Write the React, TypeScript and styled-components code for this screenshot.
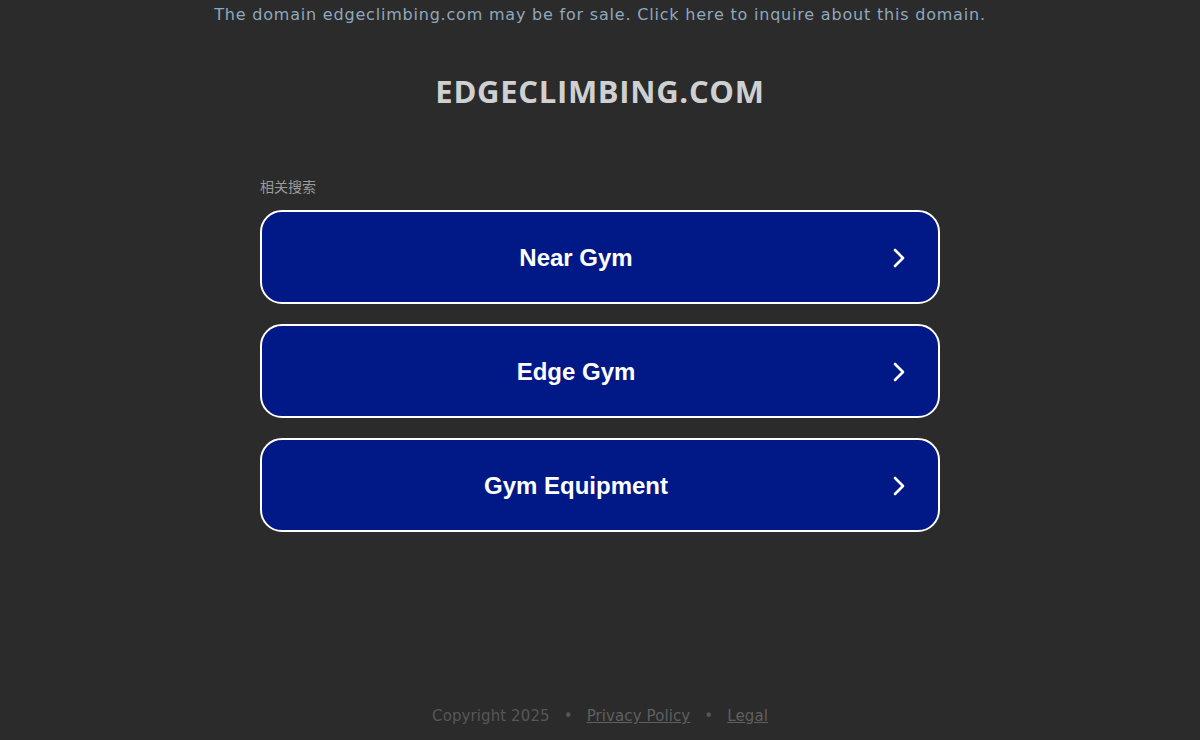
import * as React from "react";
import styled, { createGlobalStyle } from "styled-components";

const GlobalStyle = createGlobalStyle`
  html, body {
    margin: 0;
    padding: 0;
    background: #2b2b2b;
  }
  * {
    box-sizing: border-box;
  }
`;

const SPage = styled.div`
  min-height: 740px;
  display: flex;
  flex-direction: column;
  align-items: center;
  font-family: "DejaVu Sans", sans-serif;
`;

const SNotice = styled.a`
  display: block;
  margin-top: 4px;
  font-size: 16px;
  line-height: 22px;
  letter-spacing: 0.8px;
  color: #8fa8bd;
  text-decoration: none;
`;

const STitle = styled.h1`
  margin: 47px 0 0;
  font-family: "Open Sans", sans-serif;
  font-size: 31px;
  line-height: 36px;
  font-weight: 700;
  letter-spacing: 0.7px;
  color: #cfd0d2;
`;

const SSection = styled.div`
  width: 680px;
  margin-top: 68px;
`;

const SLabel = styled.div`
  font-family: "Noto Sans CJK SC", sans-serif;
  font-size: 14px;
  line-height: 18px;
  color: #9a9a9a;
  margin-bottom: 15px;
`;

const SList = styled.div`
  display: flex;
  flex-direction: column;
  gap: 20px;
`;

const SLink = styled.a`
  position: relative;
  display: flex;
  align-items: center;
  justify-content: center;
  height: 94px;
  padding: 1px 48px 0 0;
  border: 2px solid #ffffff;
  border-radius: 22px;
  background: #011887;
  color: #ffffff;
  font-family: "Liberation Sans", Arial, sans-serif;
  font-weight: 700;
  font-size: 24px;
  text-decoration: none;
`;

const SChevron = styled.svg`
  position: absolute;
  right: 32px;
  top: 50%;
  margin-top: -10px;
  width: 14px;
  height: 22px;
`;

const SFooter = styled.div`
  margin-top: auto;
  margin-bottom: 14px;
  display: flex;
  gap: 14px;
  font-size: 15px;
  line-height: 20px;
  letter-spacing: 0.1px;
  color: #575757;
`;

const SFooterLink = styled.a`
  color: #5f5f5f;
  text-decoration: underline;
`;

const searches = ["Near Gym", "Edge Gym", "Gym Equipment"];

const App = () => (
  <SPage>
    <GlobalStyle />
    <SNotice href="#">
      {"The domain edgeclimbing.com may be for sale. Click here to inquire about this domain."}
    </SNotice>
    <STitle>{"EDGECLIMBING.COM"}</STitle>
    <SSection>
      <SLabel>{"相关搜索"}</SLabel>
      <SList>
        {searches.map(term => (
          <SLink key={term} href="#">
            {term}
            <SChevron viewBox="0 0 14 22">
              <path
                d="M3 3 L11 11 L3 19"
                fill="none"
                stroke="#ffffff"
                strokeWidth="2.6"
                strokeLinecap="round"
                strokeLinejoin="round"
              />
            </SChevron>
          </SLink>
        ))}
      </SList>
    </SSection>
    <SFooter>
      <span>{"Copyright 2025"}</span>
      <span>{"•"}</span>
      <SFooterLink href="#">{"Privacy Policy"}</SFooterLink>
      <span>{"•"}</span>
      <SFooterLink href="#">{"Legal"}</SFooterLink>
    </SFooter>
  </SPage>
);

export default App;
